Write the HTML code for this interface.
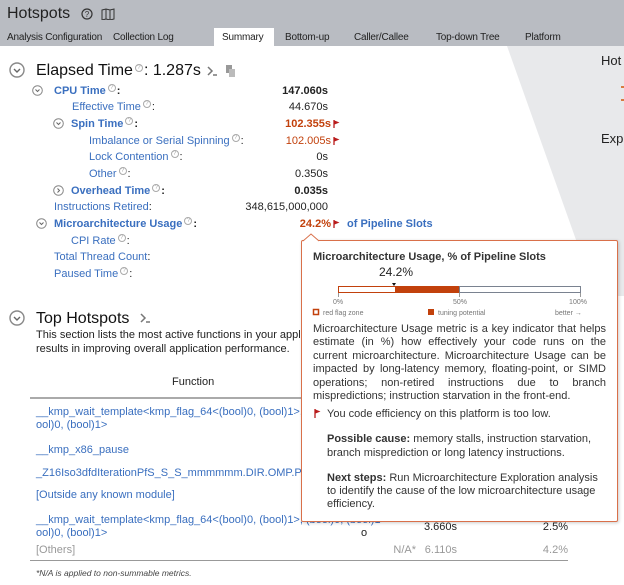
<!DOCTYPE html>
<html><head><meta charset="utf-8">
<style>
*{margin:0;padding:0;box-sizing:border-box}
body{width:624px;height:585px;overflow:hidden;background:#fff;font-family:"Liberation Sans",sans-serif;font-size:11px;color:#222;position:relative}
.a{position:absolute;white-space:nowrap;line-height:14px}
.l{color:#3a6fbf}
.b{font-weight:bold}
.r{text-align:right}
.red{color:#c2410c}
.q{display:inline-block;width:8px;height:8px;border:1px solid #aaa;border-radius:50%;font-size:6px;line-height:6px;text-align:center;color:#aaa;vertical-align:top;margin:0 1px 0 2px;font-weight:normal}
.flag{display:inline-block;width:7px;height:8px;vertical-align:middle;margin-left:2px}
.tab{position:absolute;top:29px;height:17px;line-height:17px;font-size:10px;letter-spacing:-0.2px;color:#222}
.g{color:#999}
</style></head><body>
<div style="position:absolute;left:0;top:0;width:624px;height:46px;background:#b9bcc2"></div>
<svg style="position:absolute;left:0;top:46px" width="624" height="250"><polygon points="507,0 624,0 624,250 596,250" fill="#e8e9eb"/></svg>
<div class="a" style="left:7px;top:4px;font-size:16px;line-height:20px;color:#222">Hotspots</div>
<svg style="position:absolute;left:81px;top:8px" width="12" height="12"><circle cx="6" cy="6" r="5" fill="none" stroke="#333" stroke-width="1.2"/><text x="6" y="9" font-size="8" text-anchor="middle" fill="#333" font-family="Liberation Sans">?</text></svg>
<svg style="position:absolute;left:101px;top:7px" width="14" height="13"><path d="M1 3 L5 2 L9 3 L13 2 L13 12 L9 13 L5 12 L1 13 Z M5 2 V12 M9 3 V13" fill="none" stroke="#333" stroke-width="1"/></svg>
<div style="position:absolute;left:214px;top:28px;width:60px;height:18px;background:#fff"></div>
<div class="tab" style="left:7px">Analysis Configuration</div>
<div class="tab" style="left:113px">Collection Log</div>
<div class="tab" style="left:222px">Summary</div>
<div class="tab" style="left:285px">Bottom-up</div>
<div class="tab" style="left:354px">Caller/Callee</div>
<div class="tab" style="left:436px">Top-down Tree</div>
<div class="tab" style="left:525px">Platform</div>

<div class="a" style="left:601px;top:53px;font-size:13px;line-height:16px">Hot</div>
<div class="a" style="left:601px;top:131px;font-size:13px;line-height:16px">Exp</div>
<div style="position:absolute;left:621px;top:86px;width:3px;height:2px;background:#d87a40"></div>
<div style="position:absolute;left:621px;top:99px;width:3px;height:2px;background:#d87a40"></div>

<svg style="position:absolute;left:9px;top:62px" width="16" height="16"><circle cx="8" cy="8" r="7" fill="none" stroke="#888" stroke-width="1.4"/><path d="M5 7 L8 10 L11 7" fill="none" stroke="#666" stroke-width="1.4"/></svg>
<div class="a" style="left:36px;top:61px;font-size:16px;line-height:19px;color:#111">Elapsed Time<span class="q" style="vertical-align:super">?</span>: 1.287s</div>
<svg style="position:absolute;left:207px;top:64px" width="30" height="14"><path d="M1 3 L5 7 L1 11" fill="none" stroke="#777" stroke-width="1.5"/><path d="M6 11 H10" stroke="#777" stroke-width="1.5"/><rect x="19" y="1" width="6" height="8" fill="#999"/><rect x="22" y="5" width="6" height="8" fill="#bbb"/></svg>

<svg style="position:absolute;left:32px;top:85px" width="11" height="11"><circle cx="5.5" cy="5.5" r="4.8" fill="none" stroke="#888"/><path d="M3.5 4.5 L5.5 6.5 L7.5 4.5" fill="none" stroke="#666"/></svg>
<div class="a l b" style="left:54px;top:84px">CPU Time<span class="q">?</span><span style="color:#222">:</span></div>
<div class="a b r" style="left:228px;width:100px;top:84px">147.060s</div>
<div class="a l" style="left:72px;top:100px">Effective Time<span class="q">?</span><span style="color:#222">:</span></div>
<div class="a r" style="left:228px;width:100px;top:100px">44.670s</div>
<svg style="position:absolute;left:53px;top:118px" width="11" height="11"><circle cx="5.5" cy="5.5" r="4.8" fill="none" stroke="#888"/><path d="M3.5 4.5 L5.5 6.5 L7.5 4.5" fill="none" stroke="#666"/></svg>
<div class="a l b" style="left:71px;top:117px">Spin Time<span class="q">?</span><span style="color:#222">:</span></div>
<div class="a b r red" style="left:200px;width:140px;top:117px">102.355s<svg class="flag" viewBox="0 0 7 8"><path d="M1 0 V8" stroke="#b91c1c" stroke-width="1.3"/><path d="M1.5 0.5 L6.5 2.5 L1.5 4.5Z" fill="#b91c1c"/></svg></div>
<div class="a l" style="left:89px;top:134px">Imbalance or Serial Spinning<span class="q">?</span><span style="color:#222">:</span></div>
<div class="a r red" style="left:200px;width:140px;top:134px">102.005s<svg class="flag" viewBox="0 0 7 8"><path d="M1 0 V8" stroke="#b91c1c" stroke-width="1.3"/><path d="M1.5 0.5 L6.5 2.5 L1.5 4.5Z" fill="#b91c1c"/></svg></div>
<div class="a l" style="left:89px;top:150px">Lock Contention<span class="q">?</span><span style="color:#222">:</span></div>
<div class="a r" style="left:228px;width:100px;top:150px">0s</div>
<div class="a l" style="left:89px;top:167px">Other<span class="q">?</span><span style="color:#222">:</span></div>
<div class="a r" style="left:228px;width:100px;top:167px">0.350s</div>
<svg style="position:absolute;left:53px;top:185px" width="11" height="11"><circle cx="5.5" cy="5.5" r="4.8" fill="none" stroke="#888"/><path d="M4.5 3.5 L6.5 5.5 L4.5 7.5" fill="none" stroke="#666"/></svg>
<div class="a l b" style="left:71px;top:184px">Overhead Time<span class="q">?</span><span style="color:#222">:</span></div>
<div class="a b r" style="left:228px;width:100px;top:184px">0.035s</div>
<div class="a l" style="left:54px;top:200px">Instructions Retired<span style="color:#222">:</span></div>
<div class="a r" style="left:208px;width:120px;top:200px">348,615,000,000</div>
<svg style="position:absolute;left:36px;top:218px" width="11" height="11"><circle cx="5.5" cy="5.5" r="4.8" fill="none" stroke="#888"/><path d="M3.5 4.5 L5.5 6.5 L7.5 4.5" fill="none" stroke="#666"/></svg>
<div class="a l b" style="left:54px;top:217px">Microarchitecture Usage<span class="q">?</span><span style="color:#222">:</span></div>
<div class="a b r red" style="left:200px;width:140px;top:217px">24.2%<svg class="flag" viewBox="0 0 7 8"><path d="M1 0 V8" stroke="#b91c1c" stroke-width="1.3"/><path d="M1.5 0.5 L6.5 2.5 L1.5 4.5Z" fill="#b91c1c"/></svg></div>
<div class="a l b" style="left:347px;top:217px">of Pipeline Slots</div>
<div class="a l" style="left:71px;top:234px">CPI Rate<span class="q">?</span><span style="color:#222">:</span></div>
<div class="a l" style="left:54px;top:250px">Total Thread Count<span style="color:#222">:</span></div>
<div class="a l" style="left:54px;top:267px">Paused Time<span class="q">?</span><span style="color:#222">:</span></div>

<svg style="position:absolute;left:9px;top:310px" width="16" height="16"><circle cx="8" cy="8" r="7" fill="none" stroke="#888" stroke-width="1.4"/><path d="M5 7 L8 10 L11 7" fill="none" stroke="#666" stroke-width="1.4"/></svg>
<div class="a" style="left:36px;top:309px;font-size:16px;line-height:19px;color:#111">Top Hotspots</div>
<svg style="position:absolute;left:140px;top:312px" width="14" height="12"><path d="M1 2 L5 6 L1 10" fill="none" stroke="#777" stroke-width="1.5"/><path d="M6 10 H10" stroke="#777" stroke-width="1.5"/></svg>
<div class="a" style="left:36px;top:328px">This section lists the most active functions in your application. Optimizing these hotspot functions typically</div>
<div class="a" style="left:36px;top:342px">results in improving overall application performance.</div>
<div class="a" style="left:172px;top:375px">Function</div>
<div style="position:absolute;left:30px;top:397px;width:538px;height:2px;background:#aaa"></div>
<div class="a l" style="left:36px;top:405px">__kmp_wait_template&lt;kmp_flag_64&lt;(bool)0, (bool)1&gt;, (bool)0, (bool)1&gt;</div>
<div class="a l" style="left:36px;top:418px">ool)0, (bool)1&gt;</div>
<div class="a l" style="left:36px;top:443px">__kmp_x86_pause</div>
<div class="a l" style="left:36px;top:466px">_Z16Iso3dfdIterationPfS_S_S_mmmmmm.DIR.OMP.PARALLEL</div>
<div class="a l" style="left:36px;top:488px">[Outside any known module]</div>
<div class="a l" style="left:36px;top:513px">__kmp_wait_template&lt;kmp_flag_64&lt;(bool)0, (bool)1&gt;, (bool)0, (bool)1&gt;</div>
<div class="a l" style="left:36px;top:526px">ool)0, (bool)1&gt;</div>
<div class="a" style="left:361px;top:526px">o</div>
<div class="a r" style="left:400px;width:57px;top:520px">3.660s</div>
<div class="a r" style="left:500px;width:68px;top:520px">2.5%</div>
<div class="a g" style="left:36px;top:543px">[Others]</div>
<div class="a r g" style="left:360px;width:56px;top:543px">N/A*</div>
<div class="a r g" style="left:400px;width:57px;top:543px">6.110s</div>
<div class="a r g" style="left:500px;width:68px;top:543px">4.2%</div>
<div style="position:absolute;left:30px;top:560px;width:538px;height:1px;background:#999"></div>
<div class="a" style="left:36px;top:566px;font-size:8.5px;font-style:italic;color:#444">*N/A is applied to non-summable metrics.</div>

<!-- tooltip -->
<div style="position:absolute;left:301px;top:240px;width:317px;height:282px;background:#fff;border:1px solid #d9704a;border-radius:2px;box-shadow:1px 1px 3px rgba(0,0,0,.2)"></div>
<svg style="position:absolute;left:303px;top:233px" width="22" height="9"><path d="M0 8 L8 1 L16 8" fill="#fff" stroke="#d9704a"/></svg>
<div class="a b" style="left:313px;top:250px;color:#333">Microarchitecture Usage, % of Pipeline Slots</div>
<div class="a" style="left:379px;top:265px;font-size:12px">24.2%</div>
<svg style="position:absolute;left:310px;top:280px" width="290" height="40"><g transform="translate(20,0)"><path d="M62 3 L66 3 L64 6Z" fill="#111"/><rect x="8.5" y="6.5" width="57" height="6" fill="#fff" stroke="#c2410c"/><rect x="65" y="6" width="64" height="7" fill="#c2410c"/><rect x="129.5" y="6.5" width="121" height="6" fill="#fff" stroke="#7a8290"/><path d="M8.5 13 V17 M129.5 13 V17 M250.5 13 V17" stroke="#999"/><text x="8" y="24" font-size="7" fill="#777" text-anchor="middle" font-family="Liberation Sans">0%</text><text x="130" y="24" font-size="7" fill="#777" text-anchor="middle" font-family="Liberation Sans">50%</text><text x="248" y="24" font-size="7" fill="#777" text-anchor="middle" font-family="Liberation Sans">100%</text><rect x="-16.5" y="29.5" width="5" height="5" fill="#fff" stroke="#c2410c" stroke-width="1.5"/><text x="-7" y="35" font-size="7" fill="#777" font-family="Liberation Sans">red flag zone</text><rect x="98" y="29" width="6" height="6" fill="#c2410c"/><text x="108" y="35" font-size="7" fill="#777" font-family="Liberation Sans">tuning potential</text><text x="225" y="35" font-size="7" fill="#777" font-family="Liberation Sans">better →</text></g></svg>
<div style="position:absolute;left:313px;top:323px;width:293px;font-size:11px;line-height:13.4px;text-align:justify;color:#333">Microarchitecture Usage metric is a key indicator that helps estimate (in %) how effectively your code runs on the current microarchitecture. Microarchitecture Usage can be impacted by long-latency memory, floating-point, or SIMD operations; non-retired instructions due to branch mispredictions; instruction starvation in the front-end.</div>
<svg style="position:absolute;left:314px;top:409px" width="7" height="9"><path d="M1 0 V9" stroke="#b91c1c" stroke-width="1.3"/><path d="M1.5 0.5 L6.5 2.5 L1.5 4.5Z" fill="#b91c1c"/></svg>
<div class="a" style="left:327px;top:407px;color:#333">You code efficiency on this platform is too low.</div>
<div class="a" style="left:327px;top:432px;color:#333"><b>Possible cause:</b> memory stalls, instruction starvation,</div>
<div class="a" style="left:327px;top:446px;color:#333">branch misprediction or long latency instructions.</div>
<div class="a" style="left:327px;top:471px;color:#333"><b>Next steps:</b> Run Microarchitecture Exploration analysis</div>
<div class="a" style="left:327px;top:484px;color:#333">to identify the cause of the low microarchitecture usage</div>
<div class="a" style="left:327px;top:497px;color:#333">efficiency.</div>
</body></html>
